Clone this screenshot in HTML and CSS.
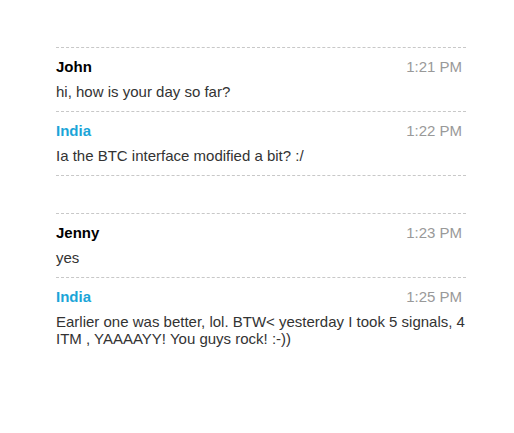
FILE: index.html
```html
<!DOCTYPE html>
<html>
<head>
<meta charset="utf-8">
<link rel="stylesheet" href="styles.css">
</head>
<body>
<div class="chat">
  <div class="group group-closed">
    <div class="item">
      <div class="head"><span class="name">John</span><span class="time">1:21 PM</span></div>
      <div class="msg">hi, how is your day so far?</div>
    </div>
    <div class="item">
      <div class="head"><span class="name name-blue">India</span><span class="time">1:22 PM</span></div>
      <div class="msg">Ia the BTC interface modified a bit? :/</div>
    </div>
  </div>
  <div class="group">
    <div class="item">
      <div class="head"><span class="name">Jenny</span><span class="time">1:23 PM</span></div>
      <div class="msg">yes</div>
    </div>
    <div class="item">
      <div class="head"><span class="name name-blue">India</span><span class="time">1:25 PM</span></div>
      <div class="msg">Earlier one was better, lol. BTW&lt; yesterday I took 5 signals, 4 ITM , YAAAAYY! You guys rock! :-))</div>
    </div>
  </div>
</div>
</body>
</html>
```

FILE: styles.css
```css
html, body {
  margin: 0;
  padding: 0;
  background: #fff;
}
body {
  font-family: "Liberation Sans", Arial, sans-serif;
  font-size: 15px;
  line-height: 17px;
  color: #333;
}
.chat {
  padding: 47px 0 0 56px;
  width: 410px;
}
.group + .group {
  margin-top: 37px;
}
.group-closed {
  border-bottom: 1px dashed #c8c8c8;
}
.item {
  border-top: 1px dashed #c8c8c8;
  padding: 10px 0 11px 0;
  display: flex;
  flex-direction: column;
  gap: 8px;
}
.head {
  display: flex;
  justify-content: space-between;
  align-items: baseline;
  padding-right: 4px;
}
.name {
  font-weight: bold;
  color: #000;
}
.name-blue {
  color: #1ba5d8;
}
.time {
  color: #999;
}
.msg {
  color: #333;
}
```
